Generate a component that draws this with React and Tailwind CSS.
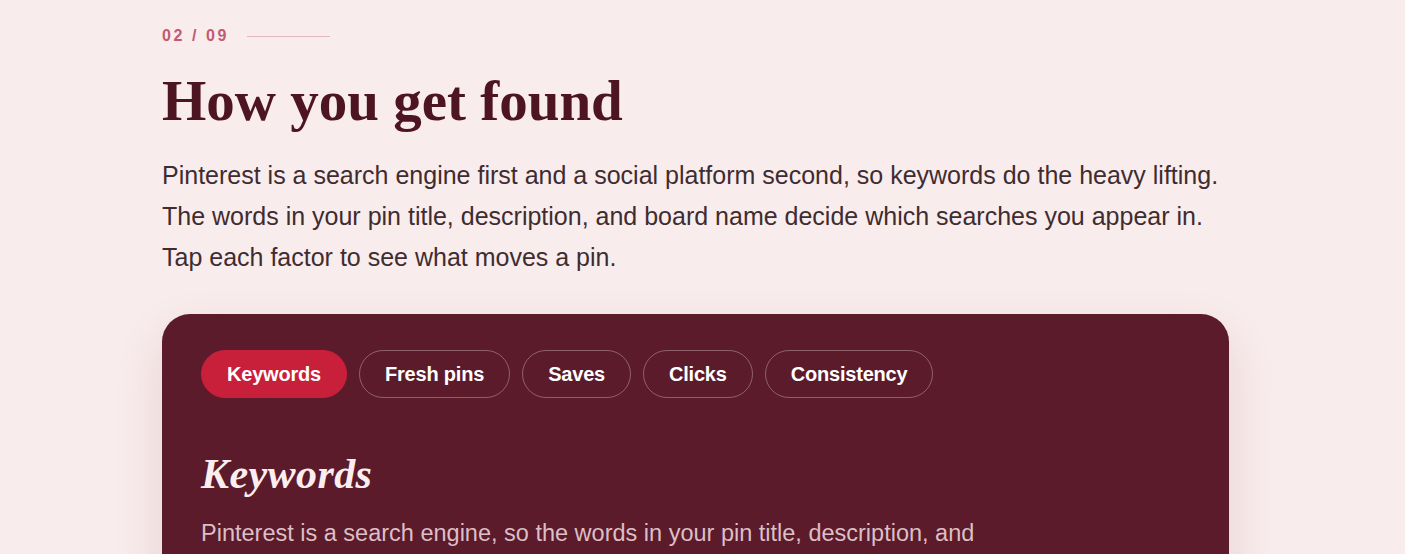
export default function App() {
  const tabs = ['Keywords', 'Fresh pins', 'Saves', 'Clicks', 'Consistency'];
  const active = 'Keywords';

  return (
    <div className="min-h-screen overflow-hidden bg-[#f9ecec] font-['Liberation_Sans',Arial,sans-serif]">
      <section className="pl-[162px] pr-[176px] pt-[24px]">
        {/* Eyebrow */}
        <div className="flex items-center gap-[18px]">
          <span className="text-[16px] font-bold tracking-[0.16em] text-[#c25a73]">02 / 09</span>
          <span className="h-px w-[83px] bg-[#e2b9c2]" />
        </div>

        <h1 className="mt-[20px] font-['Liberation_Serif','Times_New_Roman',serif] text-[57px] leading-[66px] font-bold text-[#4d1522]">
          How you get found
        </h1>

        <p className="mt-[21px] text-[25px] leading-[41px] text-[#3f2c30]">
          Pinterest is a search engine first and a social platform second, so keywords do the heavy lifting.
          <br />
          The words in your pin title, description, and board name decide which searches you appear in.
          <br />
          Tap each factor to see what moves a pin.
        </p>

        {/* Factor card */}
        <div className="mt-[36px] w-[1067px] rounded-[28px] bg-[#5c1b2a] px-[39px] pt-[36px] pb-10 shadow-[0_20px_50px_rgba(92,27,42,0.12)]">
          <div className="flex gap-[12px]">
            {tabs.map((t) => (
              <button
                key={t}
                className={
                  t === active
                    ? 'h-[48px] rounded-full border border-[#c81f3b] bg-[#c81f3b] px-[25px] text-[20px] font-bold tracking-[-0.01em] text-white'
                    : 'h-[48px] rounded-full border border-white/30 bg-transparent px-[25px] text-[20px] font-bold tracking-[-0.01em] text-white'
                }
              >
                {t}
              </button>
            ))}
          </div>

          <h2 className="mt-[55px] font-['Liberation_Serif','Times_New_Roman',serif] text-[42px] leading-[42px] font-bold italic tracking-[0.01em] text-[#fbeef0]">
            Keywords
          </h2>

          <p className="mt-[18px] max-w-[800px] text-[23.5px] leading-[40px] text-[#f3dfe3]/85">
            Pinterest is a search engine, so the words in your pin title, description, and
            board name decide which searches your pin can show up in.
          </p>
        </div>
      </section>
    </div>
  );
}
